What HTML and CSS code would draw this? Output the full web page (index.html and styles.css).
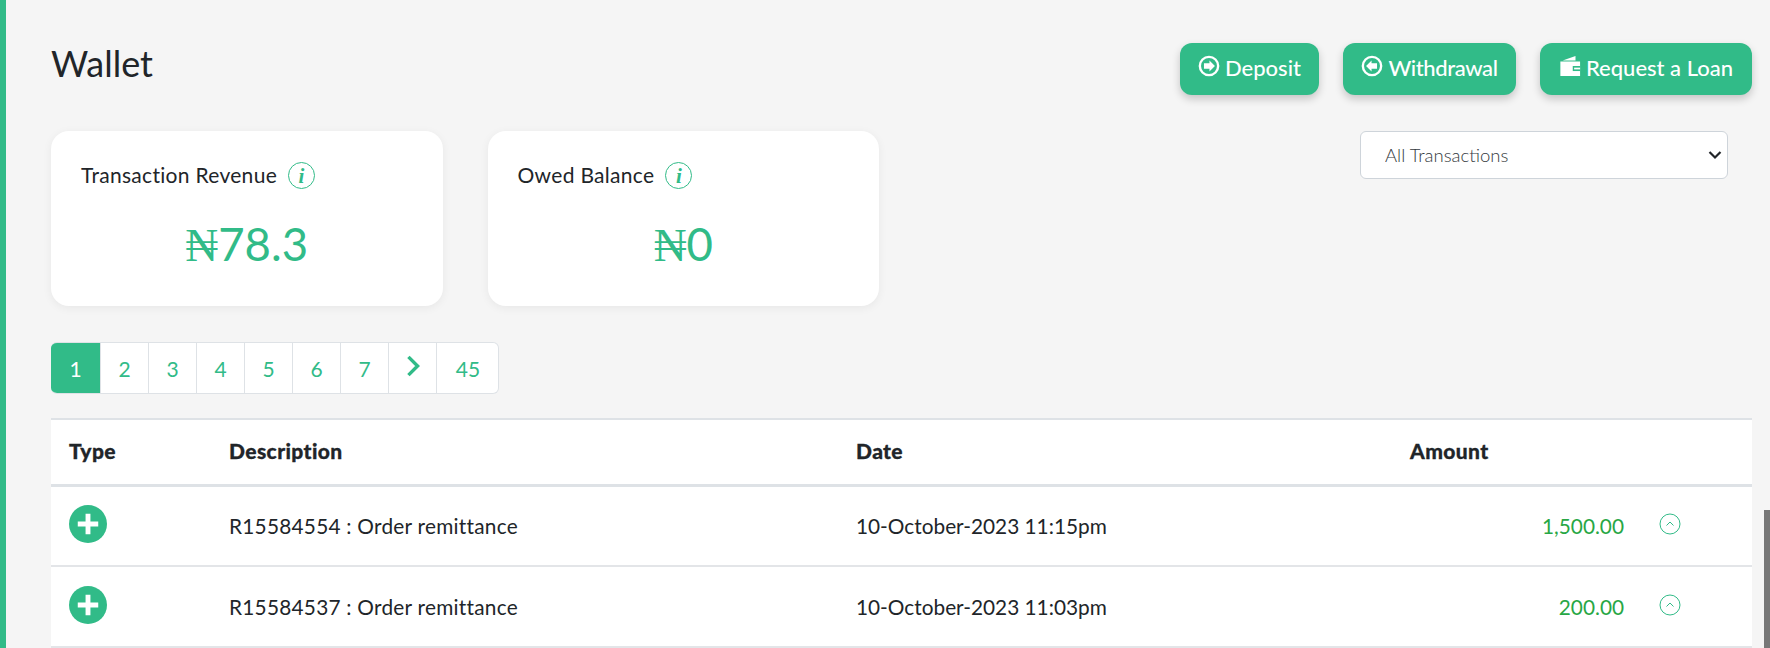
FILE: index.html
```html
<!DOCTYPE html>
<html lang="en">
<head>
  <meta charset="UTF-8">
  <title>Wallet</title>
  <link rel="stylesheet" href="styles.css">
</head>
<body>

<div class="topbar"></div>

<main class="content">

  <div class="head-row">
    <h1>Wallet</h1>
    <div class="actions">
      <button class="btn btn-deposit">
        <svg class="btn-icon" viewBox="0 0 24 24"><circle cx="12" cy="12" r="10" fill="none" stroke="#fff" stroke-width="2.600"/><path d="M12.500 6 18.500 12l-6 6V15H6.500V9h6z" fill="#fff"/></svg>
        Deposit
      </button>
      <button class="btn btn-withdraw">
        <svg class="btn-icon" viewBox="0 0 24 24"><circle cx="12" cy="12" r="10" fill="none" stroke="#fff" stroke-width="2.600"/><path d="M11.500 6 5.500 12l6 6V15h6V9h-6z" fill="#fff"/></svg>
        Withdrawal
      </button>
      <button class="btn btn-loan">
        <svg class="btn-icon" viewBox="0 0 24 24"><path d="M4 6 18 1v5zM1.500 7h21.500v16H1.500z" fill="#fff"/><rect x="15" y="12" width="8" height="5.500" fill="#31bb88"/><rect x="16.500" y="13.800" width="6.500" height="1.900" fill="#fff"/></svg>
        Request a Loan
      </button>
    </div>
  </div>

  <div class="cards-row">
    <div class="card">
      <div class="card-title">Transaction Revenue <span class="info">i</span></div>
      <div class="card-value"><span class="naira">₦</span>78.3</div>
    </div>
    <div class="card">
      <div class="card-title">Owed Balance <span class="info">i</span></div>
      <div class="card-value"><span class="naira">₦</span>0</div>
    </div>
    <select class="filter">
      <option>All Transactions</option>
    </select>
  </div>

  <ul class="pager">
    <li class="active">1</li>
    <li>2</li>
    <li>3</li>
    <li>4</li>
    <li>5</li>
    <li>6</li>
    <li>7</li>
    <li><svg class="pager-next" viewBox="0 0 14 20"><path d="M3 2 11 10 3 18" fill="none" stroke="#31bb88" stroke-width="3"/></svg></li>
    <li class="last">45</li>
  </ul>

  <table class="tx-table">
    <thead>
      <tr>
        <th class="col-type">Type</th>
        <th class="col-desc">Description</th>
        <th class="col-date">Date</th>
        <th class="col-amount">Amount</th>
        <th></th>
      </tr>
    </thead>
    <tbody>
      <tr>
        <td><svg class="plus" viewBox="0 0 39 39"><circle cx="19.500" cy="19.500" r="19.500" fill="#31bb88"/><path d="M17 9h5v8h8v5h-8v8h-5v-8H9v-5h8z" fill="#fff"/></svg></td>
        <td class="desc">R15584554 : Order remittance</td>
        <td>10-October-2023 11:15pm</td>
        <td class="amount">1,500.00</td>
        <td><svg class="toggle" viewBox="0 0 22 22"><circle cx="11" cy="11" r="10" fill="none" stroke="#31bb88"/><path d="M7.500 12.500 11 9l3.500 3.500" fill="none" stroke="#31bb88"/></svg></td>
      </tr>
      <tr>
        <td><svg class="plus" viewBox="0 0 39 39"><circle cx="19.500" cy="19.500" r="19.500" fill="#31bb88"/><path d="M17 9h5v8h8v5h-8v8h-5v-8H9v-5h8z" fill="#fff"/></svg></td>
        <td class="desc">R15584537 : Order remittance</td>
        <td>10-October-2023 11:03pm</td>
        <td class="amount">200.00</td>
        <td><svg class="toggle" viewBox="0 0 22 22"><circle cx="11" cy="11" r="10" fill="none" stroke="#31bb88"/><path d="M7.500 12.500 11 9l3.500 3.500" fill="none" stroke="#31bb88"/></svg></td>
      </tr>
    </tbody>
  </table>

</main>

<div class="scroll-thumb"></div>

</body>
</html>
```

FILE: styles.css
```css
* {
  box-sizing: border-box;
}
html, body {
  height: 648px;
  overflow: hidden;
}
body {
  margin: 0;
  background-color: #f5f5f5;
  border-left: 6px solid #31bb88;
  font-family: Lato, "Open Sans", sans-serif;
  color: #212529;
}
.topbar {
  height: 0;
  box-shadow: 0 0 14px rgba(0, 0, 0, 0.12);
}
.content {
  padding: 43px 18px 0 45px;
}

.head-row {
  display: flex;
  justify-content: space-between;
  align-items: flex-start;
  height: 88px;
}
h1 {
  margin: -2px 0 0;
  font-size: 36px;
  font-weight: 400;
  line-height: 44px;
}
.actions {
  display: flex;
  gap: 24px;
}
.btn {
  display: flex;
  align-items: center;
  justify-content: center;
  gap: 5px;
  height: 52px;
  padding: 0 0 4px;
  border: none;
  border-radius: 12px;
  background-color: #31bb88;
  color: #fff;
  font-family: inherit;
  font-size: 22px;
  font-weight: 500;
  box-shadow: 0 4px 8px rgba(0, 0, 0, 0.2);
}
.btn-deposit { width: 139px; }
.btn-withdraw { width: 173px; letter-spacing: -0.4px; }
.btn-loan { width: 212px; }
.btn-icon {
  width: 22px;
  height: 22px;
  margin-top: -3px;
}

.cards-row {
  display: flex;
  align-items: flex-start;
  gap: 45px;
  height: 211px;
}
.card {
  width: 391.500px;
  height: 175px;
  padding: 30px 30px;
  border-radius: 18px;
  background-color: #fff;
  box-shadow: 0 2px 10px rgba(0, 0, 0, 0.06);
}
.card-title {
  display: flex;
  align-items: center;
  gap: 11px;
  font-size: 21px;
  letter-spacing: 0.3px;
  line-height: 28px;
}
.info {
  width: 27px;
  height: 27px;
  border: 1px solid #31bb88;
  border-radius: 50%;
  color: #31bb88;
  font-family: "Liberation Serif", serif;
  font-style: italic;
  font-weight: 700;
  font-size: 21px;
  letter-spacing: 0;
  line-height: 26px;
  text-align: center;
}
.card-value {
  margin-top: 27px;
  color: #31bb88;
  font-size: 45.500px;
  line-height: 56px;
  text-align: center;
}
.naira {
  font-family: "Liberation Serif", "DejaVu Serif", serif;
}
.filter {
  appearance: none;
  width: 368px;
  height: 48px;
  margin-left: auto;
  margin-right: 24px;
  padding: 0 24px;
  border: 1px solid #ced4da;
  border-radius: 6px;
  background-color: #fff;
  background-image: url("data:image/svg+xml,%3Csvg xmlns='http://www.w3.org/2000/svg' viewBox='0 0 14 10'%3E%3Cpath d='M1.500 2 7 7.500 12.500 2' fill='none' stroke='%23212529' stroke-width='2.200'/%3E%3C/svg%3E");
  background-repeat: no-repeat;
  background-position: right 5px center;
  background-size: 14px 10px;
  color: #343a40;
  font-family: inherit;
  font-size: 18.500px;
  font-weight: 300;
}

.pager {
  display: flex;
  width: 448px;
  height: 52px;
  margin: 0 0 24px;
  padding: 0;
  list-style: none;
  border: 1px solid #dee2e6;
  border-left: none;
  border-radius: 6px;
  background-color: #fff;
  overflow: hidden;
}
.pager li {
  flex: 0 0 48px;
  display: flex;
  align-items: center;
  justify-content: center;
  border-left: 1px solid #dee2e6;
  color: #31bb88;
  font-size: 21px;
}
.pager .active {
  flex-basis: 49px;
  margin-top: -1px;
  margin-bottom: -1px;
  border-left: none;
  background-color: #31bb88;
  color: #fff;
}
.pager .last {
  flex-basis: 63px;
}
.pager-next {
  width: 16px;
  height: 24px;
  margin-top: -5px;
}

.tx-table {
  width: 1701px;
  border-collapse: collapse;
  table-layout: fixed;
  background-color: #fff;
  font-size: 20.800px;
}
.tx-table th {
  height: 66px;
  padding: 0 18px 2px;
  border-top: 2px solid #dee2e6;
  border-bottom: 3px solid #dee2e6;
  font-size: 21px;
  font-weight: 900;
  letter-spacing: 0.4px;
  -webkit-text-stroke: 0.3px #212529;
  text-align: left;
}
.tx-table td {
  height: 81px;
  padding: 0 18px;
  border-bottom: 2px solid #e3e5e8;
}
.col-type { width: 160px; }
.col-desc { width: 627px; }
.col-date { width: 554px; }
.col-amount { width: 248px; }
.tx-table .desc {
  letter-spacing: 0.25px;
}
.tx-table .amount {
  padding-right: 16px;
  color: #28a745;
  text-align: right;
}
.plus {
  display: block;
  width: 38px;
  height: 38px;
  margin-top: -4px;
}
.toggle {
  display: block;
  width: 22px;
  height: 22px;
  margin: -3px 0 0 1px;
}

.scroll-thumb {
  position: fixed;
  top: 510px;
  right: 0;
  width: 6px;
  height: 138px;
  background-color: #787878;
}
```
